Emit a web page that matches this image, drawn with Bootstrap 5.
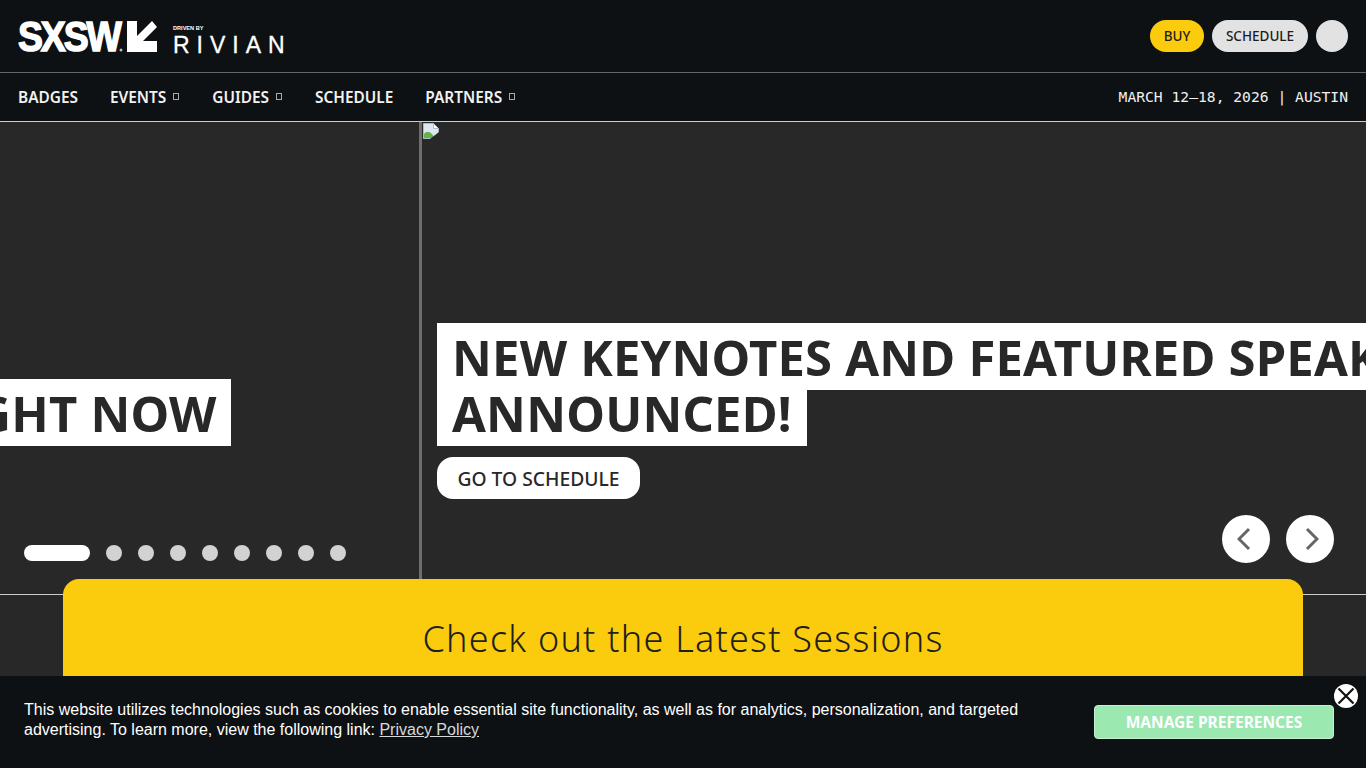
<!doctype html>
<html lang="en">
<head>
<meta charset="utf-8">
<title>SXSW</title>
<link href="https://cdn.jsdelivr.net/npm/bootstrap@5.3.0/dist/css/bootstrap.min.css" rel="stylesheet">
<style>
html,body{height:100%;overflow:hidden}
body{background:#282828;font-family:"Noto Sans","Open Sans",sans-serif;color:#282828}
.site-top{height:73px;background:#0d1114;border-bottom:1px solid #666;padding:0 18px}
.brand-word{width:103px;height:32px;font:700 43px/32px "Liberation Sans",sans-serif;color:#fff;letter-spacing:-2.4px;transform:scaleX(.87);transform-origin:left center;-webkit-text-stroke:1.5px #fff;white-space:nowrap}
.brand-arrow{margin-left:6px;width:30px;height:32px;display:block;overflow:visible}
.brand-rivian{margin-left:16px;width:113px;height:32px;color:#fff;font-family:"Liberation Sans",sans-serif}
.brand-by{font-size:5.6px;font-weight:700;line-height:7px;padding-top:5px;letter-spacing:0}
.brand-name{font-size:23px;line-height:20px;letter-spacing:7px;margin-top:3px;-webkit-text-stroke:.3px #fff;white-space:nowrap}
.pill-btn{height:32px;border-radius:16px;border:0;font-size:13.5px;font-weight:500;line-height:32px;padding:0;color:#1c1c1c}
.pill-buy{background:#facc0d;width:54px}
.pill-sched{background:#e2e2e2;width:96px}
.pill-user{width:32px;background:#e2e2e2}
.site-nav{height:49px;background:#0d1114;border-bottom:1px solid #ccc;padding:0 18px;color:#f2f2f2}
.site-nav a{font-size:15.4px;font-weight:600;color:#f2f2f2;text-decoration:none;margin-right:32px;display:flex;align-items:center;padding-top:2px}
.tofu{display:inline-block;width:6px;height:7px;border:1px solid #aaa;margin:-2px 1px 0 7px}
.date-line{font:14.67px "DejaVu Sans Mono","Liberation Mono",monospace;color:#f0f0f0;padding-bottom:2px}
.hero{height:473px;border-bottom:1px solid #ccc;background:#282828}
.slide-a{width:419px;overflow:hidden}
.slide-gap{width:3px;background:#6e6e6e}
.slide-b{overflow:hidden;padding-left:15px}
.broken{position:absolute;left:1px;top:1px;width:16px;height:16px}
.hero-title{font-size:49px;font-weight:700;line-height:56px;margin:0;white-space:nowrap;letter-spacing:.2px}
.hero-title span{background:#fff;padding:1px 15px 0 15px;-webkit-box-decoration-break:clone;box-decoration-break:clone}
.title-a{margin-top:263px;margin-left:-91px}
.title-b{margin-top:207px}
.go-btn{margin-top:16px;height:42px;width:203px;border-radius:16px;background:#fff;border:0;font-size:19.3px;font-weight:500;line-height:44px;color:#282828;padding:0;text-align:center}
.dots{position:absolute;left:24px;top:423px;gap:16px}
.dot-item{width:16px;height:16px;border-radius:8px;background:#d2d2d2}
.dot-on{width:66px;background:#fff}
.arrows{position:absolute;right:32px;top:393px;gap:16px}
.arrow-btn{width:48px;height:48px;border-radius:50%;background:#fff}
.arrow-prev{padding-right:5px}
.arrow-next{padding-left:4px}
.promo{position:absolute;left:63px;top:579px;width:1240px;height:220px;background:#facc0d;border-radius:16px 16px 0 0;text-align:center}
.promo-title{font-size:36px;font-weight:300;line-height:48px;margin:36px 0 0;color:#1f1f1f;letter-spacing:1.25px}
.cookie{position:fixed;left:0;right:0;bottom:0;height:92px;background:#0e1114;color:#fff;font:16px/20px "Liberation Sans",Arial,sans-serif;padding:24px 32px 0 24px}
.cookie-text{width:1020px}
.cookie-text a{color:#d8d8d8}
.manage{position:absolute;left:1094px;top:29px;width:240px;height:34px;background:#9be8b0;color:#fff;border:1px solid #c6f0d2;border-radius:4px;font:700 15.5px/32px "Noto Sans",sans-serif;padding:0}
.close-x{position:absolute;left:1334px;top:8px;width:24px;height:24px;border-radius:50%;background:#fff;border:0;padding:0;display:block}
</style>
</head>
<body>
<header class="site-top d-flex align-items-center justify-content-between">
  <div class="d-flex align-items-center">
    <div class="brand-word">SXSW</div>
    <svg class="brand-arrow" viewBox="0 0 30 32"><circle cx="-6" cy="30" r="1.5" fill="#bbb"/><polygon fill="#fff" points="0,1 10,1 10,16 25,1 30,7 16,21 30,21 30,32 0,32"/></svg>
    <div class="brand-rivian"><div class="brand-by">DRIVEN BY</div><div class="brand-name">RIVIAN</div></div>
  </div>
  <div class="d-flex gap-2">
    <button class="pill-btn pill-buy">BUY</button>
    <button class="pill-btn pill-sched">SCHEDULE</button>
    <button class="pill-btn pill-user" aria-label="Account"></button>
  </div>
</header>
<nav class="site-nav d-flex align-items-center justify-content-between">
  <div class="d-flex">
    <a href="#">BADGES</a>
    <a href="#">EVENTS<i class="tofu"></i></a>
    <a href="#">GUIDES<i class="tofu"></i></a>
    <a href="#">SCHEDULE</a>
    <a href="#">PARTNERS<i class="tofu"></i></a>
  </div>
  <div class="date-line">MARCH 12–18, 2026 | AUSTIN</div>
</nav>
<section class="hero d-flex position-relative">
  <div class="slide-a flex-shrink-0">
    <h2 class="hero-title title-a"><span>RIGHT NOW</span></h2>
  </div>
  <div class="slide-gap flex-shrink-0"></div>
  <div class="slide-b flex-grow-1 position-relative">
    <svg class="broken" viewBox="0 0 16 16">
      <path fill="#dfe6f3" stroke="#b4bac4" d="M.5.5h10l5 5v10H.5z"/>
      <path fill="#fff" stroke="#b4bac4" d="M10.5.5v5h5z"/>
      <path fill="#63b34a" d="M1 15v-4c2-3 5-3 8 0l3 4z"/>
      <path fill="#282828" d="M7 16l9-7v7z"/>
    </svg>
    <h2 class="hero-title title-b"><span>NEW KEYNOTES AND FEATURED SPEAKERS<br>ANNOUNCED!</span></h2>
    <button class="go-btn">GO TO SCHEDULE</button>
  </div>
  <div class="dots d-flex">
    <span class="dot-item dot-on"></span><span class="dot-item"></span><span class="dot-item"></span><span class="dot-item"></span><span class="dot-item"></span><span class="dot-item"></span><span class="dot-item"></span><span class="dot-item"></span><span class="dot-item"></span>
  </div>
  <div class="arrows d-flex">
    <div class="arrow-btn arrow-prev d-flex align-items-center justify-content-center"><svg width="14" height="24" viewBox="0 0 14 24"><path d="M12 2 2 12l10 10" fill="none" stroke="#666" stroke-width="3"/></svg></div>
    <div class="arrow-btn arrow-next d-flex align-items-center justify-content-center"><svg width="14" height="24" viewBox="0 0 14 24"><path d="M2 2l10 10L2 22" fill="none" stroke="#666" stroke-width="3"/></svg></div>
  </div>
</section>
<section class="promo"><h2 class="promo-title">Check out the Latest Sessions</h2></section>
<aside class="cookie">
  <div class="cookie-text">This website utilizes technologies such as cookies to enable essential site functionality, as well as for analytics, personalization, and targeted advertising. To learn more, view the following link: <a href="#">Privacy Policy</a></div>
  <button class="manage">MANAGE PREFERENCES</button>
  <button class="close-x" aria-label="Close"><svg width="24" height="24" viewBox="0 0 24 24" class="d-block"><path d="M4.5 4.5l15 15M19.5 4.5l-15 15" stroke="#111" stroke-width="2.2" fill="none"/></svg></button>
</aside>
</body>
</html>
